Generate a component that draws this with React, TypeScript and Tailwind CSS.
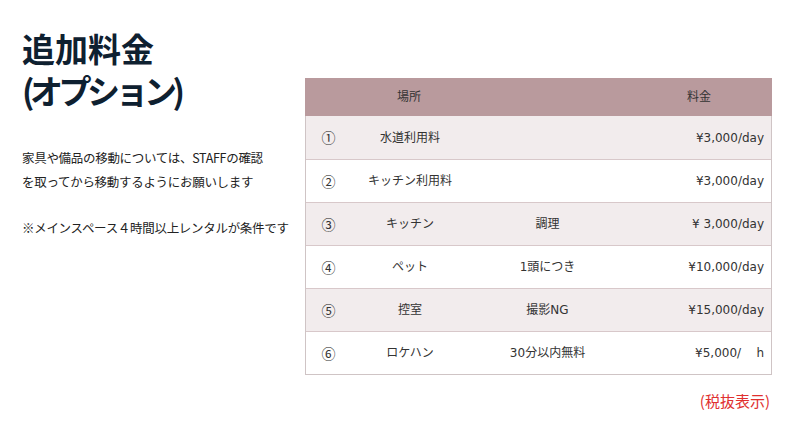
const rows = [
  { no: '①', place: '水道利用料', note: '', price: '¥3,000/day' },
  { no: '②', place: 'キッチン利用料', note: '', price: '¥3,000/day' },
  { no: '③', place: 'キッチン', note: '調理', price: '¥ 3,000/day' },
  { no: '④', place: 'ペット', note: '1頭につき', price: '¥10,000/day' },
  { no: '⑤', place: '控室', note: '撮影NG', price: '¥15,000/day' },
  { no: '⑥', place: 'ロケハン', note: '30分以内無料', price: '¥5,000/\u00a0\u00a0\u00a0\u00a0h' },
];

const jp = "font-['DejaVu_Sans','Noto_Sans_CJK_JP',sans-serif]";

export default function App() {
  return (
    <div className={`w-[800px] h-[430px] bg-white flex ${jp}`}>
      <div className="w-[305px] pl-[22px] pt-[27px]">
        <h1 className="text-[33px] leading-[42px] font-bold text-[#0e2030] font-['Noto_Sans_CJK_JP',sans-serif]">
          <div>追加料金</div>
          <div className="tracking-[-4.5px]">(オプション)</div>
        </h1>
        <div className="mt-[35px] text-[12.5px] leading-[24px] text-[#222] font-['Noto_Sans_CJK_JP',sans-serif] tracking-[-0.3px]">
          <p>家具や備品の移動については、STAFFの確認</p>
          <p>を取ってから移動するようにお願いします</p>
          <p className="mt-[22px]">※メインスペース４時間以上レンタルが条件です</p>
        </div>
      </div>

      <div className="pt-[78px] flex flex-col">
        <div className="w-[467px] border-x border-b border-[#cfc4c5] text-[12px] text-[#333]">
          <div className="grid grid-cols-[44px_120px_155px_1fr] h-[38px] items-center bg-[#b99a9d] -mx-px">
            <div />
            <div className="text-center">場所</div>
            <div />
            <div className="text-center pl-[2px]">料金</div>
          </div>
          {rows.map((r, i) => (
            <div
              key={r.no}
              className={`grid grid-cols-[44px_120px_155px_1fr] h-[43px] items-center ${
                i > 0 ? 'border-t border-[#d8c8ca]' : ''
              } ${i % 2 === 0 ? 'bg-[#f2eced]' : 'bg-white'}`}
            >
              <div className="text-center text-[14px] pl-[1px] font-['Noto_Sans_CJK_JP',sans-serif]">{r.no}</div>
              <div className="text-center">{r.place}</div>
              <div className="text-center">{r.note}</div>
              <div className="text-right pr-[7px] whitespace-pre">{r.price}</div>
            </div>
          ))}
        </div>
        <div className="mt-[15px] w-[467px] text-right pr-[2px] text-[15px] text-[#e0302f] font-['Noto_Sans_CJK_JP',sans-serif]">
          (税抜表示)
        </div>
      </div>
    </div>
  );
}
